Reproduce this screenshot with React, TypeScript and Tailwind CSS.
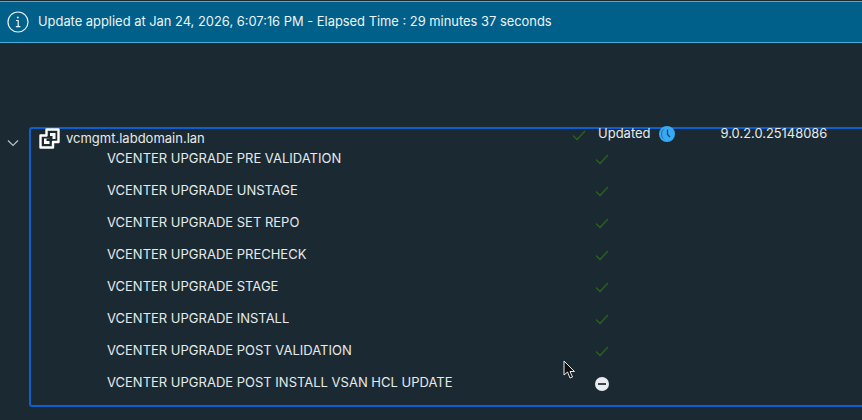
import React from 'react';

const steps = [
  'VCENTER UPGRADE PRE VALIDATION',
  'VCENTER UPGRADE UNSTAGE',
  'VCENTER UPGRADE SET REPO',
  'VCENTER UPGRADE PRECHECK',
  'VCENTER UPGRADE STAGE',
  'VCENTER UPGRADE INSTALL',
  'VCENTER UPGRADE POST VALIDATION',
];

function Check() {
  return (
    <svg width="14" height="11" viewBox="0 0 14 11" fill="none" className="shrink-0">
      <path d="M1 5.5l4 4L13 1" stroke="#2a6418" strokeWidth="1.3" />
    </svg>
  );
}

function VmIcon() {
  return (
    <svg width="21" height="21" viewBox="0 0 21 21" fill="none" className="shrink-0">
      <path d="M7.5 1.5h12v12.5h-5.5v5.5H1.5V7.5h6z" stroke="#fff" strokeWidth="2.4" strokeLinejoin="round" />
      <path d="M11 5h5.5v6H11zM5 10.5h5.5V16H5z" fill="#fff" />
      <path d="M11 8h2.5v3H11zM7.5 10.5H11V13H7.5z" fill="#1b2a32" />
    </svg>
  );
}

function ClockBadge() {
  return (
    <svg width="16" height="16" viewBox="0 0 16 16" className="shrink-0">
      <circle cx="8" cy="8" r="8" fill="#38a9f5" />
      <path d="M2 8a6 6 0 0 1 4-5.7A7 7 0 0 0 6 13.7 6 6 0 0 1 2 8z" fill="#1b2a32" opacity="0.45" />
      <path d="M8.5 3.5v5l2.5 2.5" stroke="#123f62" strokeWidth="1.2" fill="none" />
    </svg>
  );
}

export default function App() {
  return (
    <div className="relative h-[420px] w-[862px] overflow-hidden bg-[#1b2a32] font-['Inter',sans-serif] text-[13px] text-[#e6eaed]">
      <div className="mt-px flex h-[42px] items-center border-y border-[#49afd9] bg-[#00608a] pl-[7px] text-[12.9px] text-[#eef3f6]">
        <svg width="22" height="22" viewBox="0 0 22 22" fill="none" className="shrink-0">
          <circle cx="11" cy="11" r="10" stroke="#eef3f6" strokeWidth="1.2" />
          <path d="M9 9.5h2.2v6M8.8 15.7h4.6" stroke="#eef3f6" strokeWidth="1.2" />
          <circle cx="10.8" cy="6.5" r="1" fill="#eef3f6" />
        </svg>
        <span className="ml-[9px]">Update applied at Jan 24, 2026, 6:07:16 PM - Elapsed Time : 29 minutes 37 seconds</span>
      </div>

      <div className="mt-[84px] flex items-start">
        <svg width="12" height="8" viewBox="0 0 12 8" fill="none" className="ml-[7px] mr-[10px] mt-[12px] shrink-0">
          <path d="M1 1.5l5 5 5-5" stroke="#b8c2c8" strokeWidth="1.2" />
        </svg>
        <div className="h-[280px] w-[860px] shrink-0 rounded-[3px] border-2 border-[#0b5fcf] pl-[8px]">
          <div className="mt-[-1px] flex h-[21px] items-center">
            <VmIcon />
            <span className="ml-[6px] w-[506px]">vcmgmt.labdomain.lan</span>
            <span className="pb-[7px]"><Check /></span>
            <span className="ml-[12px] pb-[10px]">Updated</span>
            <span className="ml-[8px] pb-[10px]"><ClockBadge /></span>
            <span className="ml-[46px] pb-[10px] text-[12.9px]">9.0.2.0.25148086</span>
          </div>
          <div className="mt-[-7px] pl-[68px]">
            {steps.map((step) => (
              <div key={step} className="flex h-[32px] items-center">
                <span className="w-[488px] pt-[2px]">{step}</span>
                <span className="mt-[3px]"><Check /></span>
              </div>
            ))}
            <div className="flex h-[32px] items-center">
              <span className="w-[488px] pt-[2px]">VCENTER UPGRADE POST INSTALL VSAN HCL UPDATE</span>
              <svg width="14" height="14" viewBox="0 0 14 14" className="mt-[4px] shrink-0">
                <circle cx="7" cy="7" r="7" fill="#e9edf0" />
                <rect x="3" y="6" width="8" height="2" fill="#39464d" />
              </svg>
            </div>
          </div>
        </div>
      </div>

      {/* mouse pointer in the capture */}
      <svg width="13" height="19" viewBox="0 0 13 19" className="absolute left-[563px] top-[360px]">
        <path d="M1 1v14l3.5-3 2.5 6 2.5-1-2.5-5.5H11.5z" fill="#111" stroke="#e8e8e8" strokeWidth="1" />
      </svg>
    </div>
  );
}
